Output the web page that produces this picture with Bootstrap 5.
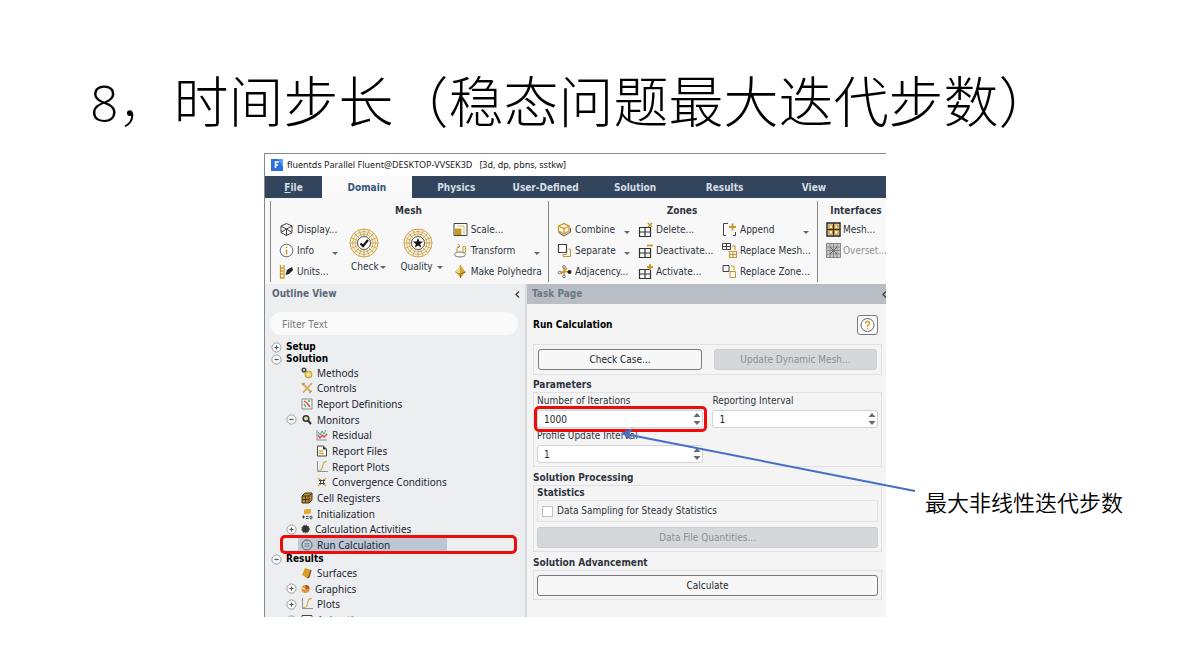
<!DOCTYPE html>
<html lang="zh-CN">
<head>
<meta charset="utf-8">
<meta name="viewport" content="width=device-width, initial-scale=1">
<title>时间步长</title>
<link href="https://cdn.jsdelivr.net/npm/bootstrap@5.3.0/dist/css/bootstrap.min.css" rel="stylesheet">
<style>
:root{--ui:"DejaVu Sans Condensed","DejaVu Sans",sans-serif;--tree:"Noto Sans","Noto Sans CJK SC",sans-serif;--cjk:"Noto Sans CJK SC",sans-serif;--gold:#c9982b;--navy:#32455c}
body{background:#fff;color:#000;overflow-x:hidden}
.slide-title{font:300 55px/60px var(--cjk);padding:68px 0 0 90px;margin:0 0 25px;white-space:nowrap}
.slide-title .num{font:300 50px/50px "Open Sans","Noto Sans",sans-serif}
.slide-title .comma{font-weight:100}
.stage{display:grid;grid-template-columns:264fr 622fr 306fr}
.note{grid-column:3;font:350 22px/32px var(--cjk);padding:332px 0 0 39px;margin:0;white-space:nowrap}
.app{grid-column:2;min-width:0;border:1px solid #85888c;border-right:0;border-bottom:0;font:10px/14px var(--ui);color:#2e353e;white-space:nowrap;position:relative}
.app svg{flex:none;display:block}
.titlebar{height:22px;padding-left:6px;gap:4px;font:9px/14px "Noto Sans",sans-serif;color:#222}
.tabs{background:var(--navy);height:22px;list-style:none}
.tabs li{flex:0 0 14.4%}
.tabs li:first-child{flex-basis:9.2%}
.tabs a{display:block;height:22px;line-height:24px;text-align:center;color:#d6dde6;font-weight:700;font-size:10px;text-decoration:none}
.tabs a.active{background:#f9f9f9;color:#35567c}
.ribbon{height:86px;background:#f8f8f8;padding:3px 0 2px 5px;display:grid;grid-template-columns:278fr 269fr 69fr}
.rgroup{border-left:1px solid #84878b;padding:3px 0 0 8px;min-width:0}
.rgroup h2,.hd{font:700 10px/14px var(--ui);margin:0;color:#2e353e}
.rgroup h2{text-align:center;padding:0 10px 1px 0}
.rgroup:last-child h2{padding-right:0}
.rgroup:last-child .tool{gap:2px}
.rcols{display:grid}
.mesh-cols{grid-template-columns:67fr 50fr 56fr 95fr}
.zone-cols{grid-template-columns:81fr 84fr 95fr}
.tool{display:flex;align-items:center;height:21px;width:100%;padding:0;border:0;background:none;color:inherit;font:inherit;gap:3px;text-align:left}
.tool svg{width:15px;height:15px}
.tool.more::after,.big span::after{content:"";border:3px solid transparent;border-top-color:#666;border-bottom:0;margin-left:auto}
.tool.more::after{margin-right:8px;margin-top:6px}
.tool:disabled{color:#8e9195}
.big{display:flex;flex-direction:column;align-items:center;padding:9px 6px 0 0;border:0;background:none;color:inherit;font:inherit;gap:2px;width:100%}
.big svg{width:30px;height:30px;margin-right:8px}
.big span{display:flex;align-items:center;line-height:14px;gap:1px}
.big .wide-gap{gap:4px}
.panes{display:grid;grid-template-columns:262fr 359fr;height:333px}
.outline{background:#eceef0;border-right:2px solid #d5dade;overflow:hidden;min-width:0}
.pane-head{height:20px;padding:0 5px 0 7px;font-weight:700;color:#5a6675}
.task .pane-head{background:#b9bec5;color:#6d7784;padding:0 0 0 5px}
.filter{display:block;width:calc(100% - 12px);margin:8px 6px 6px 5px;height:23px;border:0;border-radius:12px;background:#fafafa;padding:0 12px;font:10px/14px var(--tree)}
.filter::placeholder{color:#777;opacity:1}
.tree{list-style:none;margin:0;padding:0;font:10px/12px var(--tree);color:#1d2633}
.tree ul{list-style:none;margin:0;padding:0;display:grid;grid-auto-rows:minmax(0,1fr)}
.branch12{height:188px}.branch4{height:63px}
.node{display:flex;align-items:center}
.root{height:12px;padding-left:6px;gap:4px;font:700 10px/12px "DejaVu Sans Condensed",sans-serif;color:#000}
.l1{padding-left:36px;gap:4px}
.l1x{padding-left:21px;gap:4px}
.l1x.tight{gap:3px}
.l2{padding-left:51px;gap:4px}
.node svg{width:12px;height:12px}
.node svg.x{width:11px;height:11px}
.run{position:relative}
.run .sel{background:linear-gradient(#bcc7d3,#bcc7d3) 0 50%/100% 14px no-repeat;flex:0 0 149px;margin-left:-3px;padding-left:3px;display:flex;gap:4px;align-items:center;height:100%}
.run .mark-box{position:absolute;inset:-2px 8px -1px 15px}
.mark-box{border:3px solid #f00b0b;border-radius:5px;pointer-events:none}
.task{background:#f4f4f5;min-width:0}
.task-body{padding:11px 4px 0 6px}
.box{border:1px solid #dfe1e3}
.btn-ui{display:block;height:21px;padding:0;border:1px solid #777b80;border-radius:3px;background:#f7f7f8;font:10px/14px var(--ui);color:#22272d;width:100%}
.btn-ui:disabled{background:#d5d7da;border-color:#cbcdd0;color:#8b8f94}
.two{display:grid;grid-template-columns:167fr 166fr;column-gap:9px}
.two.btns{column-gap:12px;margin:9px 0 3px;padding:4px}
.fields{padding:0 3px 3px}
.spin{position:relative}
.spin input{display:block;width:100%;height:18px;border:1px solid #d2d4d7;border-radius:3px;background:#fff;padding:0 6px;font:10px/14px var(--ui);color:#22272d}
.spin .steps{position:absolute;right:2px;top:3px}
.spin .mark-box{position:absolute;inset:-4px -4px -4px -3px}
.fl{display:block;line-height:14px;height:17px;padding-top:1px}
.spin .arrow{position:absolute;left:84px;top:20px;z-index:2;overflow:visible}
.help{width:21px;height:20px;border:1px solid #777b80;border-radius:3px;background:#fafafa;padding:0}
.tick{appearance:none;width:11px;height:11px;border:1px solid #bfc2c6;background:#fff;margin:0}
.sampling{height:22px;margin-bottom:5px}
</style>
</head>
<body>
<svg width="0" height="0" class="position-absolute" aria-hidden="true">
<defs>
<symbol id="plus" viewBox="0 0 11 11"><circle cx="5.500" cy="5.500" r="4.600" fill="#f7f8f9" stroke="#9aa1a9"/><path d="M3.500 5.500h4M5.500 3.500v4" stroke="#555" stroke-width="1.200"/></symbol>
<symbol id="minus" viewBox="0 0 11 11"><circle cx="5.500" cy="5.500" r="4.600" fill="#f7f8f9" stroke="#9aa1a9"/><path d="M3.500 5.500h4" stroke="#555" stroke-width="1.200"/></symbol>
<symbol id="wheel" viewBox="0 0 30 30"><g fill="none" stroke="#d0a23c"><circle cx="15" cy="15" r="14"/><circle cx="15" cy="15" r="11.500" stroke-width=".8"/><circle cx="15" cy="15" r="9" stroke-width=".8"/><path d="M15 1v28M1 15h28M5 5l20 20M25 5L5 25M9.600 2l10.800 26M20.400 2L9.600 28M2 9.600l26 10.800M2 20.400L28 9.600" stroke-width=".9"/></g><circle cx="15" cy="15" r="6.500" fill="#fff" stroke="#555"/></symbol>
<symbol id="grid" viewBox="0 0 15 15"><path d="M1.500 5.500h11v9h-11zM7 5.500v9M1.500 10h11" fill="none" stroke="#333" stroke-width="1.200"/></symbol>
<symbol id="plot" viewBox="0 0 12 12"><path d="M1.500 0v10.500H12" fill="none" stroke="#8c9198"/><path d="M2 9.500c5 0 4-3 5-6s2-3 4-3" fill="none" stroke="#d3b048" stroke-width="1.200"/></symbol>
<symbol id="steps" viewBox="0 0 8 12"><path d="M4 0l3.500 4h-7zM4 12L.5 8h7z" fill="#666a70"/></symbol>
</defs>
</svg>

<h1 class="slide-title"><span class="num">8</span><span class="comma">，</span>时间步长（稳态问题最大迭代步数）</h1>
<main class="stage">
<section class="app">
  <header class="titlebar d-flex align-items-center">
    <svg width="12" height="12" viewBox="0 0 12 12"><path d="M0 0h12v12H0z" fill="#2d6fe0"/><path d="M7 0h5v8z" fill="#5d9bf5"/><path d="M4.500 9V3h3.500M4.500 6H7" fill="none" stroke="#fff" stroke-width="1.500"/></svg>
    <span>fluentds Parallel Fluent@DESKTOP-VVSEK3D&nbsp;&nbsp; [3d, dp, pbns, sstkw]</span>
  </header>
  <nav><ul class="tabs d-flex m-0 p-0">
    <li><a href="#"><u>F</u>ile</a></li><li><a href="#" class="active">Domain</a></li><li><a href="#">Physics</a></li><li><a href="#">User-Defined</a></li><li><a href="#">Solution</a></li><li><a href="#">Results</a></li><li><a href="#">View</a></li>
  </ul></nav>
  <div class="ribbon">
    <section class="rgroup"><h2>Mesh</h2>
      <div class="rcols mesh-cols">
        <div>
          <button class="tool"><svg viewBox="0 0 15 15"><path d="M7.500 1.500L13 4v6.500l-5.500 3L2 10.500V4zM2 4l5.500 3L13 4M7.500 7v6.500M2 10.500L7.500 7 13 10.500" fill="none" stroke="#444"/></svg>Display...</button>
          <button class="tool more"><svg viewBox="0 0 15 15"><circle cx="7.500" cy="7.500" r="6.300" fill="#fff" stroke="#666"/><path d="M7.500 6.500v5M7.500 3.500v1.600" stroke="#c9982b" stroke-width="1.600"/></svg>Info</button>
          <button class="tool"><svg viewBox="0 0 15 15"><path d="M1.500 1v13h3.500V1M1.500 4H4M1.500 7H4M1.500 10H4" fill="none" stroke="#c9982b" stroke-width="1.300"/><path d="M6.500 11l1.500-5 5-3 1 3-4 4z" fill="#222"/></svg>Units...</button>
        </div>
        <div><button class="big"><svg><use href="#wheel"/><path d="M11.500 15.500l2.500 2.500 5-6" fill="none" stroke="#111" stroke-width="2.200"/></svg><span>Check</span></button></div>
        <div><button class="big"><svg><use href="#wheel"/><path d="M15 10l1.400 3.400 3.600.2-2.800 2.300.9 3.600L15 17.500l-3.100 2 .9-3.600L10 13.600l3.600-.2z" fill="#111"/></svg><span class="wide-gap">Quality</span></button></div>
        <div>
          <button class="tool"><svg viewBox="0 0 15 15"><path d="M1 1.500h13v12H1z" fill="#fff" stroke="#444"/><path d="M1.500 6.500h7v6.500h-7z" fill="#c9982b"/><path d="M4 4h7v9" fill="none" stroke="#d9b768"/></svg>Scale...</button>
          <button class="tool more"><svg viewBox="0 0 15 15"><ellipse cx="7" cy="11.500" rx="5.500" ry="2.500" fill="none" stroke="#777"/><path d="M4 9.500V5q0-2 2.500-2M5 1l2 2-2 2M10 10V3.500h2.500V9z" fill="none" stroke="#c9982b"/></svg>Transform</button>
          <button class="tool"><svg viewBox="0 0 15 15"><path d="M7.500 1L12.500 8l-5 6-5-6z" fill="#d7a83a"/><path d="M7.500 1v13M2.500 8l5 2 5-2" stroke="#91640f" fill="none"/><path d="M7.500 1L2.500 8l5 2z" fill="#f3d78e"/></svg>Make Polyhedra</button>
        </div>
      </div>
    </section>
    <section class="rgroup"><h2>Zones</h2>
      <div class="rcols zone-cols">
        <div>
          <button class="tool more"><svg viewBox="0 0 15 15"><path d="M1.500 4L7 1.500 12 4v5l-5 3-5.500-3zM1.500 4L7 6.500 12 4M7 6.500V12" fill="#fff6dc" stroke="#c9982b" stroke-width="1.300"/><path d="M1.500 10.500L7 14l6.500-4V6" fill="none" stroke="#555"/></svg>Combine</button>
          <button class="tool more"><svg viewBox="0 0 15 15"><path d="M1.500 1.500h8v8h-8z" fill="#fff" stroke="#444" stroke-width="1.200"/><path d="M11.500 6h2v7.500H6v-2h4" fill="none" stroke="#c9982b"/></svg>Separate</button>
          <button class="tool"><svg viewBox="0 0 15 15"><path d="M7 3v9M2 8l11-.5M4 10l6-6" stroke="#c9982b" stroke-width="1.300" fill="none"/><g fill="#fff" stroke="#777"><circle cx="7" cy="3" r="1.300"/><circle cx="2.500" cy="8.500" r="1.300"/><circle cx="7" cy="12.500" r="1.300"/></g><circle cx="12.500" cy="8" r="2" fill="#222"/></svg>Adjacency...</button>
        </div>
        <div>
          <button class="tool"><svg><use href="#grid"/><path d="M10 1l4 4M14 1l-4 4" stroke="#c9982b" stroke-width="1.600"/></svg>Delete...</button>
          <button class="tool"><svg><use href="#grid"/><path d="M9 2.500h6" stroke="#c9982b" stroke-width="1.800"/></svg>Deactivate...</button>
          <button class="tool"><svg><use href="#grid"/><path d="M9 3h6M12 0v6" stroke="#c9982b" stroke-width="1.800"/></svg>Activate...</button>
        </div>
        <div>
          <button class="tool more"><svg viewBox="0 0 15 15"><path d="M6 1.500H1.500v12H4M11 13.500h2.500V10" fill="none" stroke="#444"/><path d="M7 5h7M10.500 1.500v7" stroke="#c9982b" stroke-width="1.800"/></svg>Append</button>
          <button class="tool"><svg viewBox="0 0 15 15"><path d="M.5.500h8v6h-8zM4.500.5v6M.5 3.500h8" fill="none" stroke="#444"/><path d="M7.500 8.500h7v6h-7zM11 8.500v6M7.500 11.500h7M10 3h3v4" fill="none" stroke="#c9982b" stroke-width="1.200"/></svg>Replace Mesh...</button>
          <button class="tool"><svg viewBox="0 0 15 15"><path d="M1 1.500h6v6H1z" fill="none" stroke="#444"/><path d="M8 7.500h5.500v6H8zM9 2h3v4" fill="none" stroke="#c9982b"/></svg>Replace Zone...</button>
        </div>
      </div>
    </section>
    <section class="rgroup"><h2>Interfaces</h2>
      <button class="tool"><svg viewBox="0 0 15 15"><path d="M1 1h13v13H1z" fill="#f8e9c2" stroke="#222" stroke-width="1.400"/><g fill="#fff8e4" stroke="#c08c1c" stroke-width="1.200"><path d="M3 3h3.500v3.500H3zM8.500 3H12v3.500H8.500zM3 8.500h3.500V12H3zM8.500 8.500H12V12H8.500z"/></g><path d="M7.500 1v13M1 7.500h13" stroke="#333"/></svg>Mesh...</button>
      <button class="tool" disabled><svg viewBox="0 0 15 15"><path d="M.5.500h14v14H.5z" fill="#c9c9c9" stroke="#888"/><path d="M.5 4h14M.5 7.500h14M.5 11h14M4 .5v14M7.500.5v14M11 .5v14" stroke="#8d8d8d"/><path d="M4 4l7 7M11 4l-7 7" stroke="#666"/></svg>Overset...</button>
    </section>
  </div>
  <div class="panes">
    <aside class="outline">
      <div class="pane-head d-flex align-items-center justify-content-between"><span>Outline View</span><svg width="5" height="7" viewBox="0 0 5 7"><path d="M4 .5l-3 3 3 3" fill="none" stroke="#333" stroke-width="1.200"/></svg></div>
      <input class="filter" type="text" placeholder="Filter Text" aria-label="Filter Text">
      <ul class="tree">
        <li class="node root"><svg class="x"><use href="#plus"/></svg>Setup</li>
        <li><div class="node root"><svg class="x"><use href="#minus"/></svg>Solution</div>
          <ul class="branch12">
            <li class="node l1"><svg viewBox="0 0 12 12"><circle cx="3" cy="3" r="1.800" fill="none" stroke="#444" stroke-width="1.500"/><circle cx="7.500" cy="7.500" r="3.500" fill="#ead36a" stroke="#bd9d32"/><circle cx="7.500" cy="7.500" r="1" fill="#fff"/></svg>Methods</li>
            <li class="node l1"><svg viewBox="0 0 12 12"><path d="M1 1l9 9M11 1L2 10.500" stroke="#d6a75a" stroke-width="1.800"/><path d="M1 3l3-2M8 11l3-2" stroke="#b58b47"/></svg>Controls</li>
            <li class="node l1"><svg viewBox="0 0 12 12"><path d="M1 1h10v10H1z" fill="#f6f6ee" stroke="#7d8b98"/><path d="M3 3l3 2 3 4" stroke="#d4523e" fill="none" stroke-width="1.500"/><path d="M3 6l2 3M7 3h2" stroke="#49a45d" stroke-width="1.300"/></svg>Report Definitions</li>
            <li class="node l1x"><svg class="x"><use href="#minus"/></svg><svg viewBox="0 0 12 12"><circle cx="5" cy="4.500" r="2.800" fill="#e9dfb0" stroke="#333" stroke-width="1.500"/><path d="M7 6.500l3 3.500" stroke="#333" stroke-width="2"/></svg>Monitors</li>
            <li class="node l2"><svg viewBox="0 0 12 12"><path d="M1 1v10h10" fill="none" stroke="#8c9198"/><path d="M2 3l2 3 2-4 2 3 2-4" fill="none" stroke="#4cae69"/><path d="M2 6l2 3 2-3 2 2 3-3" fill="none" stroke="#dc4651" stroke-width="1.300"/></svg>Residual</li>
            <li class="node l2"><svg viewBox="0 0 12 12"><path d="M1.500 1h6l3 3v7h-9z" fill="#fff" stroke="#444"/><path d="M7 1v3.500h3.500z" fill="#333"/><path d="M3 6h4M3 8.500h5" stroke="#d6a53a" stroke-width="1.300"/></svg>Report Files</li>
            <li class="node l2"><svg><use href="#plot"/></svg>Report Plots</li>
            <li class="node l2"><svg viewBox="0 0 12 12"><path d="M2 2l2.500 2.500M10 2L7.500 4.500M2 10l2.500-2.500M10 10L7.500 7.500" stroke="#d8ac38" stroke-width="1.500"/><path d="M3 4.500h6M3 7.500h6M4.500 3.500v5M7.500 3.500v5" stroke="#444"/></svg>Convergence Conditions</li>
            <li class="node l1"><svg viewBox="0 0 12 12"><path d="M1 4l3-3h7v7l-3 3H1z" fill="#b98b2c" stroke="#463819"/><path d="M1 4h7v7M8 4l3-3M4.500 4v7M1 7.500h7" stroke="#463819" fill="none"/></svg>Cell Registers</li>
            <li class="node l1"><svg viewBox="0 0 12 12"><path d="M3 2l2-1h5v4L8 6H3z" fill="#e2ab35"/><path d="M1 9h3M2.500 7.500v3M5 8.500h2.500M5 10.500h2.500" stroke="#444"/><ellipse cx="10" cy="9.500" rx="1" ry="1.500" fill="none" stroke="#444"/></svg>Initialization</li>
            <li class="node l1x tight"><svg class="x"><use href="#plus"/></svg><svg viewBox="0 0 12 12"><circle cx="5.500" cy="6" r="3.500" fill="#333"/><circle cx="5.500" cy="6" r="3.800" fill="none" stroke="#333" stroke-dasharray="1.500 1"/></svg>Calculation Activities</li>
            <li class="node l1 run"><span class="sel"><svg viewBox="0 0 12 12"><circle cx="6" cy="6" r="5" fill="none" stroke="#566472"/><path d="M3.500 4.500h5M3.500 6h5M3.500 7.500h5" stroke="#7b8996" stroke-width=".8"/></svg>Run Calculation</span><i class="mark-box"></i></li>
          </ul></li>
        <li><div class="node root"><svg class="x"><use href="#minus"/></svg>Results</div>
          <ul class="branch4">
            <li class="node l1"><svg viewBox="0 0 12 12"><path d="M4 1l6 2-2 7-2 1-5-3z" fill="#dc9b25"/><path d="M10 3L8 10l-2 1" fill="none" stroke="#7d5513" stroke-width="1.300"/></svg>Surfaces</li>
            <li class="node l1x tight"><svg class="x"><use href="#plus"/></svg><svg viewBox="0 0 12 12"><circle cx="5.500" cy="6" r="4" fill="#e09a31"/><path d="M5.500 6V2a4 4 0 014 4z" fill="#b3553a"/><path d="M2 5l3.500 1" stroke="#fff"/></svg>Graphics</li>
            <li class="node l1x"><svg class="x"><use href="#plus"/></svg><svg><use href="#plot"/></svg>Plots</li>
            <li class="node l1x"><svg class="x"><use href="#plus"/></svg><svg viewBox="0 0 12 12"><path d="M1 1.500h10v9H1z" fill="#fff" stroke="#444"/></svg>Animations</li>
          </ul></li>
      </ul>
    </aside>
    <section class="task">
      <div class="pane-head d-flex align-items-center justify-content-between"><span>Task Page</span><svg width="4" height="7" viewBox="0 0 4 7"><path d="M4 .5l-3 3 3 3" fill="none" stroke="#333" stroke-width="1.200"/></svg></div>
      <div class="task-body">
        <div class="d-flex align-items-center justify-content-between pe-1"><h2 class="hd text-black">Run Calculation</h2>
          <button class="help" aria-label="Help"><svg width="19" height="18" viewBox="0 0 19 18"><circle cx="9.500" cy="9" r="6.500" fill="#fff" stroke="#666"/><path d="M7.500 7.500q0-2 2-2t2 2q0 1-2 2.200v1M9.500 11.800v1.400" fill="none" stroke="#d99a2b" stroke-width="1.500"/></svg></button></div>
        <div class="box two btns"><button class="btn-ui">Check Case...</button><button class="btn-ui" disabled>Update Dynamic Mesh...</button></div>
        <h3 class="hd">Parameters</h3>
        <div class="box two fields">
          <div><label class="fl" for="iters">Number of Iterations</label>
            <div class="spin"><input id="iters" value="1000"><svg class="steps" width="8" height="12"><use href="#steps"/></svg><i class="mark-box"></i>
              <svg class="arrow" width="294" height="62" viewBox="0 0 294 62"><path d="M4 4L294 61" stroke="#4470c4" stroke-width="2" fill="none"/><path d="M0 3L12-2 8 4.500 10 10z" fill="#4470c4"/></svg></div></div>
          <div><label class="fl" for="rep">Reporting Interval</label><div class="spin"><input id="rep" value="1"><svg class="steps" width="8" height="12"><use href="#steps"/></svg></div></div>
          <div><label class="fl" for="prof">Profile Update Interval</label><div class="spin"><input id="prof" value="1"><svg class="steps" width="8" height="12"><use href="#steps"/></svg></div></div>
        </div>
        <h3 class="hd mt-1">Solution Processing</h3>
        <div class="box fields">
          <h4 class="hd">Statistics</h4>
          <div class="box sampling d-flex align-items-center gap-1 ps-1"><input class="tick" type="checkbox" id="ds"><label for="ds">Data Sampling for Steady Statistics</label></div>
          <button class="btn-ui" disabled>Data File Quantities...</button>
        </div>
        <h3 class="hd mt-1">Solution Advancement</h3>
        <div class="box fields pt-1"><button class="btn-ui">Calculate</button></div>
      </div>
    </section>
  </div>
</section>
<p class="note">最大非线性迭代步数</p>
</main>
<script src="https://cdn.jsdelivr.net/npm/bootstrap@5.3.0/dist/js/bootstrap.bundle.min.js"></script>
</body>
</html>
